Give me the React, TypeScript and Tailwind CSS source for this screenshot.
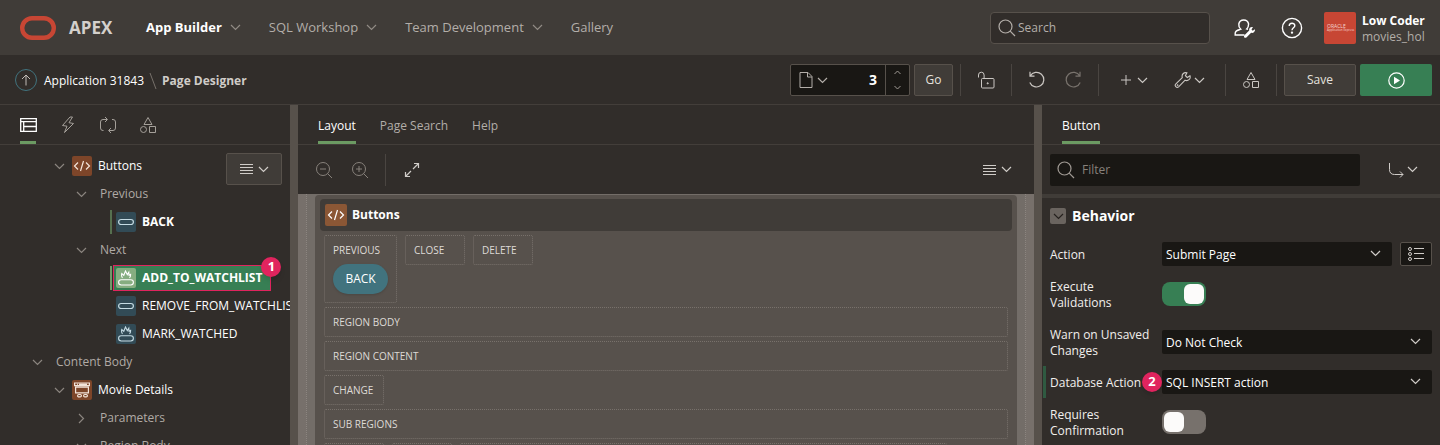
import React from "react";

type IconProps = { className?: string };

function Svg({ w = 16, h = 16, sw = 1, className = "", children }: { w?: number; h?: number; sw?: number; className?: string; children: React.ReactNode }) {
  return (
    <svg width={w} height={h} viewBox={`0 0 ${w} ${h}`} fill="none" stroke="currentColor" strokeWidth={sw} className={`shrink-0 ${className}`} aria-hidden="true">
      {children}
    </svg>
  );
}

const Chevron = ({ className }: IconProps) => (
  <Svg w={11} h={7} sw={1.2} className={className}><path d="M1 1l4.500 4.500L10 1" /></Svg>
);
const ChevronRight = ({ className }: IconProps) => (
  <Svg w={11} h={11} sw={1.2} className={className}><path d="M3 1l4.500 4.500L3 10" /></Svg>
);
const SearchIcon = ({ className }: IconProps) => (
  <Svg w={18} h={18} sw={1.2} className={className}><circle cx="7.500" cy="7.500" r="6.500" /><path d="M12.200 12.200l4.800 4.800" /></Svg>
);
const ShapesIcon = ({ className }: IconProps) => (
  <Svg w={18} h={18} className={className}><path d="M9 1.500l4 7H5zM10.500 10.500h6v6h-6z" /><circle cx="4.500" cy="13.500" r="3" /></Svg>
);
const MenuIcon = () => (
  <Svg w={13} h={12}><path d="M0 1.500h13M0 4.500h13M0 7.500h13M0 10.500h13" /></Svg>
);
const ZoomIcon = ({ plus = false }: { plus?: boolean }) => (
  <Svg w={18} h={18}>
    <circle cx="8" cy="8" r="6.500" /><path d="M12.500 12.500l4.500 4.500M5 8h6" />{plus && <path d="M8 5v6" />}
  </Svg>
);
const CodeIcon = () => (
  <Svg w={18} h={12} sw={1.2}><path d="M5 2.500L1.500 6L5 9.500M13 2.500l3.500 3.500L13 9.500M10.500 1l-3 10" /></Svg>
);
const PillIcon = () => (
  <Svg w={16} h={8} sw={1.2}><rect x="0.600" y="1.500" width="14.800" height="5" rx="2.500" /></Svg>
);
const HotPillIcon = () => (
  <Svg w={16} h={16} sw={1.1}>
    <rect x="0.600" y="9.700" width="14.800" height="5.300" rx="2.650" />
    <path d="M4.500 7.800C3.400 6.500 3.400 5 3.800 3.500l2 1.800L7.500 1l1.800 3.600L10.800 2.300l.2 2.900 1.600-.8C12.700 6 12.400 7 11.500 7.800" />
  </Svg>
);
const RegionIcon = () => (
  <Svg w={16} h={16} sw={1.2}>
    <path d="M.6 1h14.800v2.600H.6zM3 2.300h.8M5 2.300h8M1.600 5.200h12.800v5.600H1.600z" />
    <rect x="3.600" y="12.500" width="3.800" height="2.400" rx="1.200" /><rect x="9.600" y="12.500" width="3.800" height="2.400" rx="1.200" />
  </Svg>
);
const RotateIcon = ({ className }: IconProps) => (
  <Svg w={18} h={18} sw={1.2} className={className}><path d="M2.200 5A7.300 7.300 0 1 1 1.800 11.500M2 .8V5.200h4.500" /></Svg>
);
const WrenchIcon = () => (
  <Svg w={18} h={18} sw={1.1}>
    <path d="M16 4.800l-2.700 1.700-1.900-1.800 1.500-2.900C9.700 1 7.400 3.500 8.300 6.700L1.900 12.900a1.900 1.900 0 0 0 2.700 2.900l6.500-6.600C14 10.500 17 8 16 4.800z" />
    <circle cx="3.600" cy="14.200" r=".3" />
  </Svg>
);

function NavItem({ label, active, arrow = true }: { label: string; active?: boolean; arrow?: boolean }) {
  return (
    <a href="#" className={`flex items-center gap-2 text-[13px] ${active ? "font-bold text-white" : "text-[#b3aea9]"}`}>
      {label}
      {arrow && <Chevron className="text-[#918b85]" />}
    </a>
  );
}

function Separator() {
  return <span className="h-8 w-px bg-[#4a4541]" />;
}

function Badge({ n, className }: { n: number; className: string }) {
  return (
    <span className={`absolute flex size-5 items-center justify-center rounded-full bg-[#e0245e] text-[13px] font-bold text-white shadow-md ${className}`}>{n}</span>
  );
}

function TreeArrow({ open = true }: { open?: boolean }) {
  return (
    <span className="flex w-[22px] shrink-0 justify-center text-[#8b857f]">
      {open ? <Chevron /> : <ChevronRight />}
    </span>
  );
}

function Folder({ label, indent, open = true }: { label: string; indent: string; open?: boolean }) {
  return (
    <li className={`flex h-7 items-center gap-2 text-[#b0aaa5] ${indent}`}>
      <TreeArrow open={open} />
      {label}
    </li>
  );
}

function RegionNode({ label, children }: { label: string; children: React.ReactNode }) {
  return (
    <li className="flex h-7 items-center pl-12 font-medium text-white">
      <TreeArrow />
      <span className="ml-0.5 mr-1.5 flex size-5 items-center justify-center rounded-xs bg-[#7d4529] text-[#f3e4da]">{children}</span>
      {label}
    </li>
  );
}

function ButtonNode({ label, changed, selected, hot }: { label: string; changed?: boolean; selected?: boolean; hot?: boolean }) {
  return (
    <li className="flex h-7 items-center pl-[110px] text-white">
      <span className={`h-6 w-0.5 shrink-0 ${changed ? (selected ? "bg-[#6f9a68]" : "bg-[#56704f]") : ""}`} />
      <span className={`relative ml-px flex h-[26px] items-center gap-1.5 border pl-0.5 pr-2 whitespace-nowrap ${selected ? "border-[#e0245e] bg-[#377f54]" : "border-transparent"} ${changed ? "font-bold" : "font-medium"}`}>
        <span className={`flex size-5 items-center justify-center rounded-xs ${selected ? "bg-[#85ad80] text-white" : "bg-[#324b56] text-[#c5dbe3]"}`}>
          {hot ? <HotPillIcon /> : <PillIcon />}
        </span>
        {label}
        {selected && <Badge n={1} className="-right-[11px] -top-[9px]" />}
      </span>
    </li>
  );
}

function Tab({ label, active }: { label: string; active?: boolean }) {
  return (
    <button role="tab" aria-selected={!!active} className={`h-full border-b-3 pt-1.5 ${active ? "border-[#6b9a62] font-medium text-white" : "border-transparent text-[#b3aea9]"}`}>{label}</button>
  );
}

function IconTab({ label, active, children }: { label: string; active?: boolean; children: React.ReactNode }) {
  return (
    <button role="tab" aria-label={label} aria-selected={!!active} className={`flex h-full w-4 items-center justify-center border-b-3 pt-1 ${active ? "border-[#6b9a62] text-white" : "border-transparent text-[#a5a09a]"}`}>{children}</button>
  );
}

function Slot({ label, className = "", children }: { label: string; className?: string; children?: React.ReactNode }) {
  return (
    <div className={`min-h-[30px] min-w-[60px] rounded-xs border border-dotted border-[#78716b] px-2 py-[7px] text-[10px] leading-[14px] font-medium text-[#dedad6] ${className}`}>
      {label}
      {children}
    </div>
  );
}

function Field({ label, id, changed, badge, switchRow, children }: { label: string; id: string; changed?: boolean; badge?: number; switchRow?: boolean; children: React.ReactNode }) {
  return (
    <div className={`relative flex items-start pl-2 pr-2 ${switchRow ? "pb-2" : ""}`}>
      {changed && <span className="absolute left-px top-1 h-8 w-[3px] bg-[#2f5a41]" />}
      <label htmlFor={id} className="flex h-10 w-28 shrink-0 items-center pt-px pr-2 leading-4 font-medium text-[#f1efed]">{label}</label>
      {badge && <Badge n={badge} className="left-[100px] top-2.5" />}
      <div className="flex flex-1 gap-2 pt-2">{children}</div>
    </div>
  );
}

function Select({ id, value }: { id: string; value: string }) {
  return (
    <span className="relative flex flex-1">
      <select id={id} className="h-6 w-full appearance-none rounded-xs bg-[#191714] px-1 pt-px font-medium text-white">
        <option>{value}</option>
      </select>
      <Chevron className="pointer-events-none absolute right-[11px] top-2 text-[#d0ccc8]" />
    </span>
  );
}

function Toggle({ id, on }: { id: string; on?: boolean }) {
  return (
    <span className="relative flex h-6 w-11">
      <input id={id} type="checkbox" role="switch" defaultChecked={on} className="peer h-6 w-11 appearance-none rounded-lg bg-[#77716c] checked:bg-[#377f54]" />
      <span className="pointer-events-none absolute left-0.5 top-0.5 size-5 rounded-md bg-[#fcfbfa] peer-checked:left-[22px]" />
    </span>
  );
}

export default function App() {
  return (
    <div className="flex h-screen flex-col overflow-hidden bg-[#312d2a] font-['Open_Sans',sans-serif] text-xs text-white">
      <header className="flex h-[55px] shrink-0 items-center bg-[#403c38] pt-px pl-5 pr-3">
        <svg width="36" height="24" viewBox="0 0 36 24" fill="none" aria-hidden="true">
          <rect x="2.200" y="2.200" width="31.600" height="19.600" rx="9.800" stroke="#c74634" strokeWidth="4.400" />
        </svg>
        <span className="ml-[13px] w-[77px] text-[17px] font-bold text-[#d4d0cc]">APEX</span>
        <nav className="flex flex-1 items-center gap-7">
          <NavItem label="App Builder" active />
          <NavItem label="SQL Workshop" />
          <NavItem label="Team Development" />
          <NavItem label="Gallery" arrow={false} />
        </nav>
        <label className="flex h-8 w-[220px] items-center gap-0.5 rounded-sm border border-[#57514b] bg-[#312d2a] px-[7px] text-[#b3aea9]">
          <SearchIcon />
          <input aria-label="Search" placeholder="Search" className="w-full bg-transparent outline-none placeholder:text-[#b3aea9]" />
        </label>
        <button aria-label="Administration" className="ml-6">
          <Svg w={22} h={22} sw={1.4}>
            <path d="M10.500 18H1.200v-1.800c0-2.700 3-3.200 5.600-4A6 6 0 0 1 4.800 7 5 5 0 0 1 14.600 7c0 2-.7 3.800-1.900 4.900l1.300.5" />
            <path d="M21 12.200l-2.300 1.500-1.200-1.200 1.400-2.300c-2.500-.5-4.200 1.300-3.700 3.400l-5 4.900c-.9 1.500.8 3 2.200 2.100l4.700-4.800c2.300.7 4.200-1.300 3.900-3.600z" fill="currentColor" stroke="none" />
          </Svg>
        </button>
        <button aria-label="Help" className="ml-[25px]">
          <Svg w={22} h={22} sw={1.4}>
            <circle cx="11" cy="11" r="9.600" /><path d="M8.200 9c0-3.700 5.700-3.500 5.600-.3 0 2-2.800 2.200-2.800 4.500" /><circle cx="11" cy="15.600" r=".5" fill="currentColor" />
          </Svg>
        </button>
        <div className="ml-[21px] flex size-8 flex-col justify-center rounded-xs bg-[#c74634] pl-[3px] text-[#f6d8d2]">
          <span className="text-[5px] leading-[5px]">ORACLE</span>
          <span className="text-[3px] leading-[3px] whitespace-nowrap">Application Express</span>
        </div>
        <div className="ml-1.5 w-[66px] pt-px leading-4 whitespace-nowrap">
          <div className="font-bold">Low Coder</div>
          <div className="text-[#b3aea9]">movies_hol</div>
        </div>
      </header>

      <div className="flex h-[50px] shrink-0 items-center border-b border-[#433e3a] pt-px pr-2 pl-[15px]">
        <button aria-label="Up" className="flex size-[22px] items-center justify-center rounded-full border border-[#41737e] text-[#c0bbb6]">
          <Svg w={10} h={12}><path d="M5 1v10.500M1 5l4-4 4 4" /></Svg>
        </button>
        <nav className="flex flex-1 items-center pt-px">
          <a href="#" className="ml-[7px]">Application 31843</a>
          <Svg w={8} h={16} className="mx-[5px] text-[#77716b]"><path d="M1 0l6 16" /></Svg>
          <span className="font-bold text-[#d0ccc8]">Page Designer</span>
        </nav>
        <div className="flex h-8 w-[120px] rounded-xs border border-[#57514b] bg-[#191714]">
          <button aria-label="Page selector" className="flex items-center gap-1 pl-2 text-[#b3aea9]">
            <Svg w={14} h={18}><path d="M1 1.500h8l4 4v11H1zM8.500 1.500V6H13" /></Svg>
            <Chevron />
          </button>
          <input aria-label="Page number" defaultValue="3" className="w-0 flex-1 bg-transparent pr-2 text-right text-sm font-bold outline-none" />
          <div className="flex w-6 flex-col items-center justify-between border-l border-[#57514b] py-[5px] text-[#a09a94]">
            <button aria-label="Next page"><Svg w={7} h={5}><path d="M.5 4l3-3 3 3" /></Svg></button>
            <button aria-label="Previous page"><Svg w={7} h={5}><path d="M.5 1l3 3 3-3" /></Svg></button>
          </div>
        </div>
        <button className="ml-1 h-8 w-[39px] rounded-xs border border-[#57514b] bg-[#403c38] font-medium text-[#e5e2df]">Go</button>
        <div className="ml-[7px] flex items-center text-[#cbc7c3]">
          <Separator />
          <button aria-label="Unlock page" className="flex w-[50px] justify-center">
            <Svg w={18} h={18}><rect x="4.500" y="7.500" width="12.500" height="9.500" rx="1" /><path d="M1.500 6.500V4a2.800 2.800 0 0 1 5.600 0v3.500" /><circle cx="10.700" cy="12.300" r=".6" fill="currentColor" /></Svg>
          </button>
          <Separator />
          <button aria-label="Undo" className="flex w-[50px] justify-center"><RotateIcon /></button>
          <button aria-label="Redo" className="flex w-[22px] justify-center text-[#79736d]"><RotateIcon className="-scale-x-100" /></button>
          <span className="w-3.5" />
          <Separator />
          <button aria-label="Create" className="ml-[21px] flex items-center gap-[5px]">
            <Svg w={12} h={12}><path d="M6 1v10M1 6h10" /></Svg><Chevron />
          </button>
          <button aria-label="Utilities" className="ml-[26px] flex items-center gap-0.5">
            <WrenchIcon /><Chevron />
          </button>
          <span className="w-5" />
          <Separator />
          <button aria-label="Shared components" className="flex w-[50px] justify-center"><ShapesIcon /></button>
          <Separator />
        </div>
        <button className="ml-[7px] h-8 w-[72px] rounded-xs border border-[#57514b] bg-[#403c38] font-medium text-[#e5e2df]">Save</button>
        <button aria-label="Run page" className="ml-1 flex h-8 w-[72px] items-center justify-center rounded-xs bg-[#377f54]">
          <Svg w={17} h={17} sw={1.2}><circle cx="8.500" cy="8.500" r="7.700" /><path d="M6 4.800v7.400l6-3.700z" fill="currentColor" stroke="none" /></Svg>
        </button>
      </div>

      <div className="flex min-h-0 flex-1">
        <aside className="flex w-[290px] shrink-0 flex-col overflow-hidden">
          <div role="tablist" className="flex h-10 shrink-0 gap-6 border-b border-[#433e3a] pl-5">
            <IconTab label="Rendering" active>
              <Svg w={17} h={14} sw={1.3}><path d="M.7.7h15.600v12.600H.7zM.7 3.700h15.600M3.700 3.700v9.600M3.700 8.500h12.600" /></Svg>
            </IconTab>
            <IconTab label="Dynamic actions">
              <Svg w={14} h={18}><path d="M9 1L1.500 9.500l4.500.7L3.500 16.500 12.500 7.500 8 6.700 11.500 1z" /></Svg>
            </IconTab>
            <IconTab label="Processing">
              <Svg w={18} h={18}><path d="M8 3.500H4a2.500 2.500 0 0 0-2.500 2.500v6A2.500 2.500 0 0 0 4 14.500h.5M6 1l2.500 2.500L6 6M13 3.500h1A2.500 2.500 0 0 1 16.500 6v6a2.500 2.500 0 0 1-2.500 2.500H10M12 12l-2.500 2.500L12 17" /></Svg>
            </IconTab>
            <IconTab label="Shared components"><ShapesIcon /></IconTab>
          </div>
          <div className="relative min-h-0 flex-1">
            <ul className="h-full overflow-hidden pt-[7px]">
              <RegionNode label="Buttons"><CodeIcon /></RegionNode>
              <Folder label="Previous" indent="pl-[70px]" />
              <ButtonNode label="BACK" changed />
              <Folder label="Next" indent="pl-[70px]" />
              <ButtonNode label="ADD_TO_WATCHLIST" changed selected hot />
              <ButtonNode label="REMOVE_FROM_WATCHLIST" />
              <ButtonNode label="MARK_WATCHED" hot />
              <Folder label="Content Body" indent="pl-[26px]" />
              <RegionNode label="Movie Details"><RegionIcon /></RegionNode>
              <Folder label="Parameters" indent="pl-[70px]" open={false} />
              <Folder label="Region Body" indent="pl-[70px]" />
            </ul>
            <button aria-label="Tree menu" className="absolute right-2 top-2 flex h-8 w-14 items-center justify-center gap-[5px] rounded-xs border border-[#57514b] bg-[#403c38] text-[#d0ccc8]">
              <MenuIcon /><Chevron />
            </button>
          </div>
        </aside>

        <div className="w-2 shrink-0 bg-[#57514b]" />

        <main className="flex min-w-0 flex-1 flex-col">
          <div role="tablist" className="flex h-10 shrink-0 gap-6 border-b border-[#433e3a] pl-5">
            <Tab label="Layout" active />
            <Tab label="Page Search" />
            <Tab label="Help" />
          </div>
          <div className="flex h-[49px] shrink-0 items-center pr-[22px] pl-[17px] text-[#d0ccc8]">
            <button aria-label="Zoom out" className="text-[#87817b]"><ZoomIcon /></button>
            <button aria-label="Zoom in" className="ml-[18px] text-[#87817b]"><ZoomIcon plus /></button>
            <span className="ml-4 h-8 w-px bg-[#4a4541]" />
            <button aria-label="Expand" className="ml-[18px]">
              <Svg w={16} h={16} sw={1.2}><path d="M10 1.500h4.500V6M14.500 1.500L9 7M6 14.500H1.500V10M1.500 14.500L7 9" /></Svg>
            </button>
            <button aria-label="Layout menu" className="ml-auto flex items-center gap-[5px]"><MenuIcon /><Chevron /></button>
          </div>
          <div className="min-h-0 flex-1 overflow-hidden bg-[#77706b] px-2">
            <div className="border-x border-dotted border-[#8c8580] bg-[#736d68] px-2 pt-px">
              <div className="rounded-t-sm bg-[#57514c] px-[5px] pt-1">
                <div className="flex h-8 items-center gap-[5px] rounded-sm bg-[#403c38] pl-[5px] font-bold">
                  <span className="flex size-[22px] items-center justify-center rounded-xs bg-[#8b5735]"><CodeIcon /></span>
                  Buttons
                </div>
                <div className="flex flex-col items-start gap-1 px-1 pt-1">
                  <div className="flex items-start gap-2">
                    <Slot label="PREVIOUS" className="h-[68px] w-[73px]">
                      <button className="mt-[7px] flex h-[30px] w-full items-center justify-center rounded-full bg-[#41737e] text-xs font-medium text-white shadow-sm">BACK</button>
                    </Slot>
                    <Slot label="CLOSE" />
                    <Slot label="DELETE" />
                  </div>
                  <Slot label="REGION BODY" className="w-full" />
                  <Slot label="REGION CONTENT" className="w-full" />
                  <Slot label="CHANGE" />
                  <Slot label="SUB REGIONS" className="w-full" />
                  <div className="flex w-full gap-2 pr-[61px]">
                    <Slot label="EDIT" />
                    <Slot label="COPY" />
                    <Slot label="HELP" className="flex-1" />
                  </div>
                </div>
              </div>
            </div>
          </div>
        </main>

        <div className="w-2 shrink-0 bg-[#57514b]" />

        <aside className="flex w-[398px] shrink-0 flex-col overflow-hidden">
          <div role="tablist" className="flex h-10 shrink-0 border-b border-[#433e3a] pl-5">
            <Tab label="Button" active />
          </div>
          <div className="flex h-[53px] shrink-0 items-center border-b-4 border-[#403c38] pr-[22px] pl-2">
            <label className="flex h-8 w-[310px] items-center gap-[7px] rounded-xs bg-[#191714] px-[7px] text-[#a09a94]">
              <SearchIcon />
              <input aria-label="Filter" placeholder="Filter" className="w-full bg-transparent outline-none placeholder:text-[#87817b]" />
            </label>
            <button aria-label="Go to group" className="ml-auto flex items-center gap-[3px] text-[#d0ccc8]">
              <Svg w={16} h={16}><path d="M1.500 1v6.500c0 3 1.500 5 5 5H15M12 9.500l3 3-3 3" /></Svg><Chevron />
            </button>
          </div>
          <section>
            <h2 className="flex h-9 items-center gap-1.5 pl-2 text-sm font-bold">
              <button aria-label="Collapse" className="flex size-4 items-center justify-center rounded-xs bg-[#6a645f] text-[#25211e]"><Chevron /></button>
              Behavior
            </h2>
            <Field label="Action" id="action">
              <Select id="action" value="Submit Page" />
              <button aria-label="Quick pick" className="flex h-6 w-8 items-center justify-center rounded-xs border border-[#57514b] bg-[#191714] text-[#d0ccc8]">
                <Svg w={18} h={16}><circle cx="3" cy="3" r="1.500" /><circle cx="3" cy="8" r="1.500" /><circle cx="3" cy="13" r="1.500" /><path d="M7 2.500h10M7 7.500h10M7 12.500h10" /></Svg>
              </button>
            </Field>
            <Field label="Execute Validations" id="validations" switchRow><Toggle id="validations" on /></Field>
            <Field label="Warn on Unsaved Changes" id="warn"><Select id="warn" value="Do Not Check" /></Field>
            <Field label="Database Action" id="dbaction" changed badge={2}><Select id="dbaction" value="SQL INSERT action" /></Field>
            <Field label="Requires Confirmation" id="confirm" switchRow><Toggle id="confirm" /></Field>
          </section>
        </aside>
      </div>
    </div>
  );
}
